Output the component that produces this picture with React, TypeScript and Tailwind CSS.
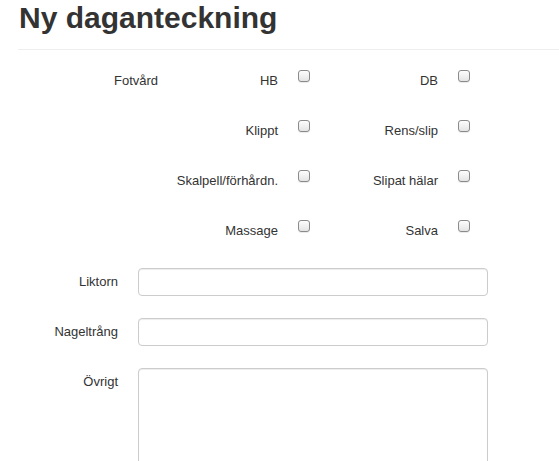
import React from "react";

function Box() {
  return (
    <input
      type="checkbox"
      className="appearance-none block w-[12px] h-[12px] mt-[-1px] rounded-[3px] border border-[#8a8a8a] bg-gradient-to-b from-[#fdfdfd] to-[#e4e4e4] shadow-[0_1px_0_rgba(0,0,0,0.08)]"
    />
  );
}

const rows: [string, string, string][] = [
  ["Fotvård", "HB", "DB"],
  ["", "Klippt", "Rens/slip"],
  ["", "Skalpell/förhårdn.", "Slipat hälar"],
  ["", "Massage", "Salva"],
];

export default function App() {
  return (
    <div className="w-[559px] h-[461px] overflow-hidden bg-white text-[#333] font-['Liberation_Sans',Helvetica,Arial,sans-serif] text-[13px] leading-[20px]">
      <div className="pl-[18px]">
        <h1 className="text-[30px] leading-[36px] font-bold pl-[1px]">Ny daganteckning</h1>
        <div className="h-[1px] bg-[#eee] mt-[13px]" />
        <div className="pt-[21px] flex flex-col gap-[30px]">
          {rows.map(([a, b, c], i) => (
            <div key={i} className="flex items-start h-[20px]">
              <div className="w-[142px] pl-[96px]">{a}</div>
              <div className="w-[118px] text-right">{b}</div>
              <div className="w-[20px]" />
              <div className="w-[12px]"><Box /></div>
              <div className="w-[128px] text-right">{c}</div>
              <div className="w-[20px]" />
              <div className="w-[12px]"><Box /></div>
            </div>
          ))}
        </div>
        <div className="mt-[27px] flex flex-col gap-[22px]">
          <div className="flex items-center">
            <label className="w-[100px] text-right">Liktorn</label>
            <input type="text" className="ml-[20px] w-[350px] h-[28px] border border-[#ccc] rounded-[4px] shadow-[inset_0_1px_1px_rgba(0,0,0,0.075)] outline-none" />
          </div>
          <div className="flex items-center">
            <label className="w-[100px] text-right">Nageltrång</label>
            <input type="text" className="ml-[20px] w-[350px] h-[28px] border border-[#ccc] rounded-[4px] shadow-[inset_0_1px_1px_rgba(0,0,0,0.075)] outline-none" />
          </div>
          <div className="flex items-start">
            <label className="w-[100px] text-right pt-[4px]">Övrigt</label>
            <textarea className="ml-[20px] w-[350px] h-[120px] border border-[#ccc] rounded-[4px] shadow-[inset_0_1px_1px_rgba(0,0,0,0.075)] outline-none resize-none" />
          </div>
        </div>
      </div>
    </div>
  );
}
